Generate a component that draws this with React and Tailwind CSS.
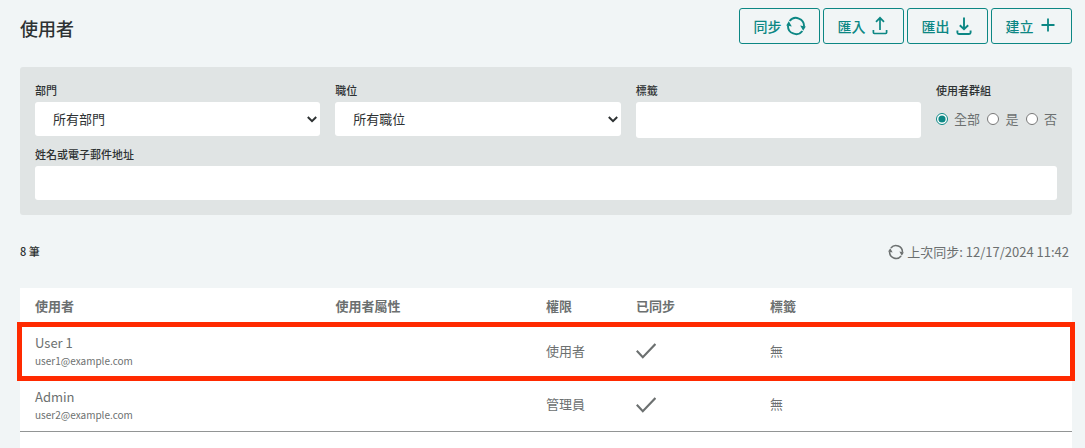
import { useState } from "react";

const users = [
    { name: "User 1", email: "user1@example.com", role: "使用者", synced: true, tag: "無", highlighted: true },
    { name: "Admin", email: "user2@example.com", role: "管理員", synced: true, tag: "無", highlighted: false }
];

const groupOptions = [
    { value: "all", label: "全部" },
    { value: "yes", label: "是" },
    { value: "no", label: "否" }
];

function SyncIcon({ className }) {
    return (
        <svg viewBox="0 0 20 20" className={className} fill="none" stroke="currentColor" strokeWidth="1.9" aria-hidden="true">
            <path d="M3.6 5A8.1 8.1 0 0 1 18 10.6" />
            <path d="M16.4 15A8.1 8.1 0 0 1 2 9.4" />
            <path d="M14.2 9.4l5.6 1.2-2.6 4.2z" fill="currentColor" stroke="none" />
            <path d="M5.8 10.6L.2 9.4l2.6-4.2z" fill="currentColor" stroke="none" />
        </svg>
    );
}

function ImportIcon() {
    return (
        <svg viewBox="0 0 16 20" className="w-4 h-5" fill="none" stroke="currentColor" strokeWidth="1.7" aria-hidden="true">
            <path d="M8 14V2.2M4 5.8L8 1.8 12 5.8" />
            <path d="M1.4 14v2.6q0 .9.9.9h11.4q.9 0 .9-.9V14" />
        </svg>
    );
}

function ExportIcon() {
    return (
        <svg viewBox="0 0 16 20" className="w-4 h-5" fill="none" stroke="currentColor" strokeWidth="1.9" aria-hidden="true">
            <path d="M8 1.5V13M3.8 9.2L8 13.2 12.2 9.2" />
            <path d="M1.4 14.5v2q0 1.5 1.5 1.5h10.2q1.5 0 1.5-1.5v-2" />
        </svg>
    );
}

function PlusIcon() {
    return (
        <svg viewBox="0 0 16 20" className="w-4 h-5" fill="none" stroke="currentColor" strokeWidth="1.8" aria-hidden="true">
            <path d="M8 2.5v13M1.5 9h13" />
        </svg>
    );
}

function CheckIcon() {
    return (
        <svg viewBox="0 0 20 16" className="w-5 h-4" fill="none" stroke="currentColor" strokeWidth="2.1" role="img" aria-label="已同步">
            <path d="M.8 7.8L6.8 14.2 19.4 1" />
        </svg>
    );
}

function ActionButton({ label, icon }) {
    return (
        <button
            type="button"
            className="flex h-9 w-[81px] items-center justify-center gap-1 rounded-[3px] border border-[#0c8784] text-sm font-medium text-[#0c8784] cursor-pointer"
        >
            {label}
            {icon}
        </button>
    );
}

function FilterSelect({ id, label, placeholder }) {
    return (
        <div>
            <label htmlFor={id} className="block h-5 text-[11px] leading-4 font-medium">{label}</label>
            <div className="relative">
                <select id={id} className="block h-[34px] w-full appearance-none rounded-[3px] bg-white pl-[18px] text-[13px]">
                    <option>{placeholder}</option>
                </select>
                <svg
                    viewBox="0 0 10 7"
                    className="pointer-events-none absolute right-[3px] top-[14px] h-[7px] w-[10px]"
                    fill="none"
                    stroke="currentColor"
                    strokeWidth="2"
                    aria-hidden="true"
                >
                    <path d="M.8 1L5 5.2 9.2 1" />
                </svg>
            </div>
        </div>
    );
}

export default function App() {
    const [group, setGroup] = useState("all");

    return (
        <div className="min-h-screen bg-[#f1f5f6] pl-5 pr-[13px] pt-2 font-['Noto_Sans_CJK_TC',sans-serif] text-[#2d3132]">
            <header className="flex items-center justify-between">
                <h1 className="pt-1 text-lg font-medium">使用者</h1>
                <div className="flex gap-[3px]">
                    <ActionButton label="同步" icon={<SyncIcon className="h-5 w-5" />} />
                    <ActionButton label="匯入" icon={<span className="px-[2px]"><ImportIcon /></span>} />
                    <ActionButton label="匯出" icon={<span className="px-[2px]"><ExportIcon /></span>} />
                    <ActionButton label="建立" icon={<span className="px-[2px]"><PlusIcon /></span>} />
                </div>
            </header>

            {/* Filters */}
            <form className="mt-[23px] rounded-[3px] bg-[#e0e4e4] p-[15px]">
                <div className="grid grid-cols-[1fr_1fr_1fr_121px] gap-x-[15px]">
                    <FilterSelect id="department" label="部門" placeholder="所有部門" />
                    <FilterSelect id="position" label="職位" placeholder="所有職位" />
                    <div>
                        <label htmlFor="tags" className="block h-5 text-[11px] leading-4 font-medium">標籤</label>
                        <input id="tags" type="text" className="block h-9 w-full rounded-[3px] bg-white px-4 text-[13px]" />
                    </div>
                    <fieldset className="whitespace-nowrap">
                        <legend className="block h-5 text-[11px] leading-4 font-medium">使用者群組</legend>
                        <div className="flex h-[34px] items-center justify-between text-[13px] text-[#6c7070]">
                            {groupOptions.map((option) => (
                                <label key={option.value} className="flex items-center gap-[6px]">
                                    <input
                                        type="radio"
                                        name="group"
                                        value={option.value}
                                        checked={group === option.value}
                                        onChange={() => setGroup(option.value)}
                                        className="h-3 w-3 accent-[#0c8784]"
                                    />
                                    {option.label}
                                </label>
                            ))}
                        </div>
                    </fieldset>
                </div>
                <label htmlFor="keyword" className="mt-2 block h-5 text-[11px] leading-4 font-medium">姓名或電子郵件地址</label>
                <input id="keyword" type="text" className="block h-[34px] w-full rounded-[3px] bg-white px-4 text-[13px]" />
            </form>

            <div className="flex h-[73px] items-center justify-between">
                <p className="text-[11px] font-medium">8 筆</p>
                <p className="flex items-center gap-[3px] pr-[3px] text-[13px] text-[#6c7070]">
                    <SyncIcon className="h-4 w-4" />
                    上次同步: 12/17/2024 11:42
                </p>
            </div>

            <table className="w-full table-fixed bg-white text-left text-[13px] text-[#6c7070]">
                <colgroup>
                    <col className="w-2/7" />
                    <col className="w-1/5" />
                    <col className="w-[90px]" />
                    <col className="w-[134px]" />
                    <col />
                </colgroup>
                <thead>
                    <tr className="h-[37px]">
                        <th className="px-[15px] pb-[2px] font-bold">使用者</th>
                        <th className="px-[15px] pb-[2px] font-bold">使用者屬性</th>
                        <th className="px-[15px] pb-[2px] font-bold">權限</th>
                        <th className="px-[15px] pb-[2px] font-bold">已同步</th>
                        <th className="px-[15px] pb-[2px] font-bold">標籤</th>
                    </tr>
                </thead>
                <tbody>
                    {users.map((user) => (
                        <tr
                            key={user.email}
                            className={`h-[53px] border-b border-[#929595] ${user.highlighted ? "outline-5 -outline-offset-2 outline-[#ff2a00]" : ""}`}
                        >
                            <td className="px-[15px]">
                                <div className="leading-5">{user.name}</div>
                                <div className="text-[10px] leading-4">{user.email}</div>
                            </td>
                            <td />
                            <td className="px-[15px] pb-[2px]">{user.role}</td>
                            <td className="px-[15px]">{user.synced && <CheckIcon />}</td>
                            <td className="px-[15px] pb-[2px]">{user.tag}</td>
                        </tr>
                    ))}
                    <tr className="h-[17px]">
                        <td colSpan={5} />
                    </tr>
                </tbody>
            </table>
        </div>
    );
}
